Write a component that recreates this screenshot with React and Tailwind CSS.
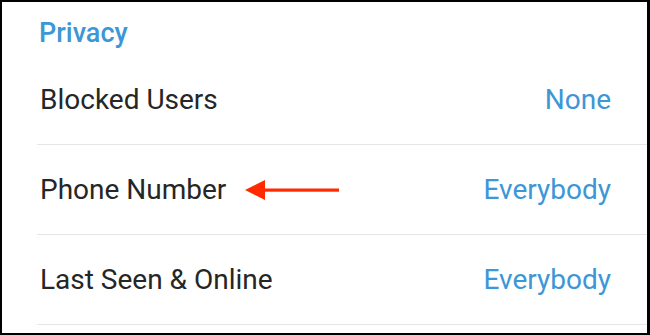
import React from 'react';

const rows = [
  { label: 'Blocked Users', value: 'None' },
  { label: 'Phone Number', value: 'Everybody', arrow: true },
  { label: 'Last Seen & Online', value: 'Everybody' },
];

function Arrow() {
  return (
    <svg width="94" height="22" viewBox="0 0 94 22" className="ml-[19px]">
      <polygon points="0,11 20,1 20,21" fill="#ff2a00" />
      <rect x="18" y="9.5" width="76" height="3.2" fill="#ff2a00" />
    </svg>
  );
}

export default function App() {
  return (
    <div
      className="w-[650px] h-[335px] bg-white border-black border-l-2 border-t-2 border-r-[3px] border-b-2 overflow-hidden"
      style={{ fontFamily: 'Roboto, "Noto Sans", sans-serif' }}
    >
      <div className="pl-[37px] pt-[13px] h-[53px] text-[27px] leading-[36px] font-medium text-[#3d96d6]">
        Privacy
      </div>
      <div className="pl-[35px]">
        {rows.map((row) => (
          <div
            key={row.label}
            className="flex items-center justify-between h-[90px] border-b border-[#e6e6e6] pl-[3px] pr-[36px]"
          >
            <div className="flex items-center">
              <span className="text-[28px] text-[#262626] leading-none">{row.label}</span>
              {row.arrow && <Arrow />}
            </div>
            <span className="text-[28px] text-[#3d96d6] leading-none">{row.value}</span>
          </div>
        ))}
      </div>
    </div>
  );
}
